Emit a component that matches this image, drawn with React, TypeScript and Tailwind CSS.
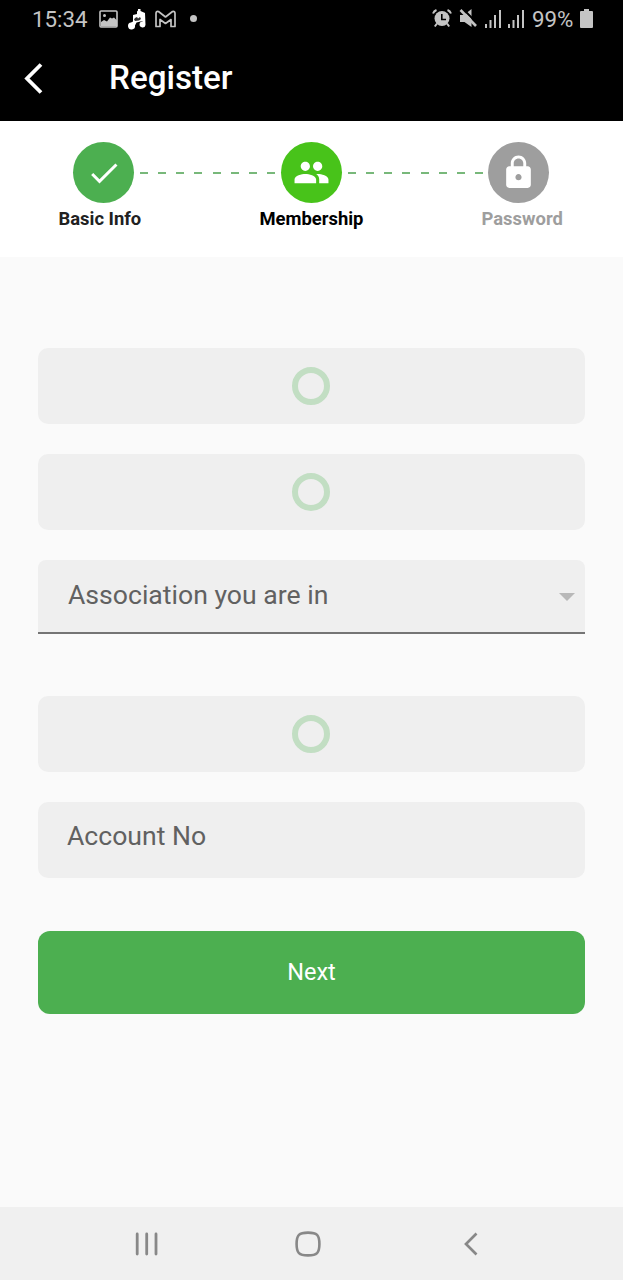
import React from "react";

function StatusBar() {
  return (
    <div className="flex h-[37px] items-center justify-between pl-[32px] pr-[30px] text-[22.3px] leading-[36px] text-[#c4c4c4]">
      <div className="flex h-[37px] items-center">
        <span className="w-[67px] whitespace-nowrap">15:34</span>
        <svg width="19" height="18" viewBox="0 0 19 18" fill="none">
          <rect x="1" y="1" width="17" height="16" rx="1" stroke="#c4c4c4" strokeWidth="1.6" />
          <path d="M2 12l3-2 3 1.500 3-4 2 1 2-1 3 3v6H2z" fill="#c4c4c4" />
          <circle cx="5.5" cy="5.500" r="1.500" fill="#c4c4c4" />
        </svg>
        <svg className="ml-[10px]" width="18" height="22" viewBox="0 0 18 22" fill="#fff">
          <path d="M9 3.500l1-1V1h2.500v2l4.500 2 .5 12a3 3 0 1 1-3-3.500V13l-6 1.500-1.500 3A3.500 3.500 0 1 1 3 14.500l2-1V7l4-1z" />
          <path d="M7 10l2-1 1 1.500 2-1.500 1 2-2 1.500-4 .5-1-1.500z" fill="#333" />
        </svg>
        <svg className="ml-[9px]" width="21" height="18" viewBox="0 0 21 18" fill="none" stroke="#c4c4c4" strokeWidth="1.700" strokeLinejoin="round">
          <path d="M1 16.500V3.500Q1 1 3.500 1.500L10.500 7l7-5.500Q20 1 20 3.500v13h-4V9.500l-5.500 4L5 9.500v7z" />
        </svg>
        <span className="ml-[14px] h-[7px] w-[7px] rounded-full bg-[#c4c4c4]" />
      </div>
      <div className="flex h-[37px] items-center">
        <svg width="20" height="19" viewBox="0 0 20 19" fill="none">
          <circle cx="10" cy="9.500" r="7.500" fill="#c4c4c4" />
          <path d="M1 4.500Q2 2 4.500 1M19 4.500Q18 2 15.500 1M5 14.500l-2.200 3M15 14.500l2.200 3" stroke="#c4c4c4" strokeWidth="2" />
          <path d="M9.800 5V10.500H14" stroke="#000" strokeWidth="1.600" />
        </svg>
        <svg className="ml-[7px]" width="18" height="19" viewBox="0 0 18 19" fill="none">
          <path d="M1 6h4l7.500-6v18L5.500 13H1z" fill="#c4c4c4" />
          <path d="M4 0l14 14" stroke="#000" strokeWidth="2" />
          <path d="M1.500 1l15.500 16" stroke="#c4c4c4" strokeWidth="2.600" />
        </svg>
        <div className="ml-[8px] flex gap-[7px]">
          <SignalBars />
          <SignalBars />
        </div>
        <span className="ml-[8px] w-[43px] whitespace-nowrap">99%</span>
        <svg className="ml-[5px]" width="13" height="19" viewBox="0 0 13 19" fill="#c4c4c4">
          <path d="M4 0h5v2h3a1 1 0 0 1 1 1v15a1 1 0 0 1-1 1H1a1 1 0 0 1-1-1V3a1 1 0 0 1 1-1h3z" />
        </svg>
      </div>
    </div>
  );
}

function SignalBars() {
  return (
    <svg width="16" height="18" viewBox="0 0 16 18" fill="#c4c4c4">
      <path d="M0 14h2v4H0zM4.500 10h2v8h-2zM9 5h2v13H9zM14 0h2v18h-2z" />
    </svg>
  );
}

function Dashes() {
  return (
    <div className="mx-[6px] flex w-[135px] shrink-0 justify-between">
      {[0, 1, 2, 3, 4, 5, 6, 7].map((i) => (
        <span key={i} className="h-[2px] w-[8px] bg-[#78b87a]" />
      ))}
    </div>
  );
}

function StepCircle({ className, size, path }: { className: string; size: number; path: string }) {
  return (
    <div className={"flex h-[61px] w-[61px] shrink-0 items-center justify-center rounded-full " + className}>
      <svg width={size} height={size} viewBox="0 0 24 24" fill="#fff">
        <path d={path} />
      </svg>
    </div>
  );
}

function Stepper() {
  return (
    <section className="h-[136px] bg-white pt-[21px]">
      <div className="flex items-center pl-[73px]">
        <StepCircle className="bg-[#4caf50]" size={36} path="M9 16.170 4.830 12l-1.420 1.410L9 19 21 7l-1.410-1.410z" />
        <Dashes />
        <StepCircle
          className="bg-[#48c31a]"
          size={37}
          path="M16 11c1.660 0 2.990-1.340 2.990-3S17.660 5 16 5s-3 1.340-3 3 1.340 3 3 3zm-8 0c1.660 0 2.990-1.340 2.990-3S9.660 5 8 5 5 6.340 5 8s1.340 3 3 3zm0 2c-2.330 0-7 1.170-7 3.500V19h14v-2.500c0-2.330-4.670-3.500-7-3.500zm8 0c-.29 0-.62.020-.97.050 1.160.84 1.970 1.970 1.970 3.450V19h6v-2.500c0-2.330-4.670-3.500-7-3.500z"
        />
        <Dashes />
        <StepCircle
          className="-ml-px bg-[#9e9e9e]"
          size={37}
          path="M18 8h-1V6c0-2.760-2.240-5-5-5S7 3.240 7 6v2H6c-1.100 0-2 .9-2 2v10c0 1.100.9 2 2 2h12c1.100 0 2-.9 2-2V10c0-1.100-.9-2-2-2zm-6 9c-1.100 0-2-.9-2-2s.9-2 2-2 2 .9 2 2-.9 2-2 2zm3.100-9H8.900V6c0-1.710 1.390-3.100 3.100-3.100s3.100 1.390 3.100 3.100v2z"
        />
      </div>
      <div className="mt-[4px] flex whitespace-nowrap pl-[58.500px] text-[18.400px] font-bold leading-[24px]">
        <span className="w-[201px] text-[#212121]">Basic Info</span>
        <span className="w-[222px] text-black">Membership</span>
        <span className="text-[#9e9e9e]">Password</span>
      </div>
    </section>
  );
}

function LoadingField() {
  return (
    <div className="flex h-[76px] shrink-0 items-center justify-center rounded-[10px] bg-[#efefef] pr-px">
      <span className="h-[38px] w-[38px] rounded-full border-6 border-[#c2dec3]" />
    </div>
  );
}

export default function App() {
  return (
    <div className="flex h-[1280px] w-[623px] flex-col overflow-hidden bg-[#fafafa] font-['Roboto',sans-serif]">
      <header className="h-[121px] shrink-0 bg-black">
        <StatusBar />
        <div className="mt-px flex h-[80px] items-center pl-[24px]">
          <svg width="19" height="32" viewBox="0 0 19 32" fill="none" stroke="#fff" strokeWidth="3.800">
            <path d="M17 2.500 3 16.500l14 14" />
          </svg>
          <h1 className="ml-[66px] text-[33.200px] font-medium leading-[40px] text-white">Register</h1>
        </div>
      </header>
      <Stepper />
      <main className="flex grow flex-col px-[38px] pt-[91px]">
        <LoadingField />
        <div className="h-[30px] shrink-0" />
        <LoadingField />
        <div className="mt-[30px] flex h-[74px] shrink-0 items-center justify-between rounded-t-[8px] border-b-2 border-[#757575] bg-[#efefef] pl-[30px] pr-[10px]">
          <span className="mb-[2px] text-[26.600px] leading-[32px] text-[#616161]">Association you are in</span>
          <svg className="mt-[2px]" width="16" height="8" viewBox="0 0 16 8" fill="#b8b8b8">
            <path d="M0 0h16L8 8z" />
          </svg>
        </div>
        <div className="h-[62px] shrink-0" />
        <LoadingField />
        <div className="mt-[30px] flex h-[76px] shrink-0 rounded-[10px] bg-[#efefef] pl-[29px] pt-[18px]">
          <span className="text-[26.600px] leading-[32px] text-[#616161]">Account No</span>
        </div>
        <button className="mt-[53px] flex h-[83px] shrink-0 items-center justify-center rounded-[12px] bg-[#4caf50] text-[23.500px] font-normal text-white">
          Next
        </button>
      </main>
      <nav className="flex h-[73px] shrink-0 items-center bg-[#f0f0f0] pl-[135px]">
        <svg width="24" height="24" viewBox="0 0 24 24" fill="none" stroke="#888" strokeWidth="2.800" strokeLinecap="round">
          <path d="M2.200 2v20M11.700 2v20M21 2v20" />
        </svg>
        <svg className="ml-[136px]" width="26" height="26" viewBox="0 0 26 26" fill="none" stroke="#888" strokeWidth="2.600">
          <path d="M13 1.600C22 1.600 24.400 4 24.400 13S22 24.400 13 24.400 1.600 22 1.600 13 4 1.600 13 1.600z" />
        </svg>
        <svg className="ml-[143px]" width="14" height="24" viewBox="0 0 14 24" fill="none" stroke="#888" strokeWidth="2.700">
          <path d="M12.500 1.500 2 12l10.500 10.500" />
        </svg>
      </nav>
    </div>
  );
}
